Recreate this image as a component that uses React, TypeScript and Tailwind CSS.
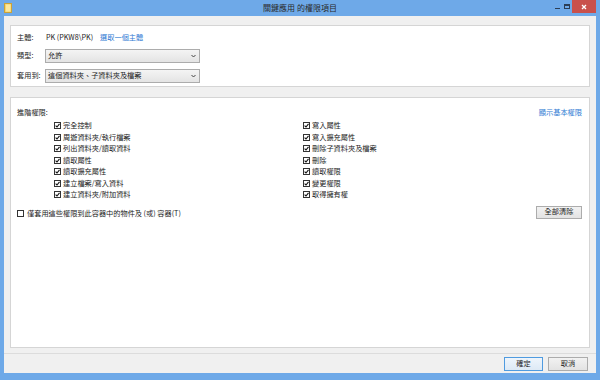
import React from "react";

const font = { fontFamily: '"Noto Sans CJK TC", "Noto Sans", sans-serif' };

function Check({ checked }: { checked: boolean }) {
  return (
    <span className="w-[7px] h-[7px] border border-[#333] bg-white flex items-center justify-center shrink-0">
      {checked && (
        <svg width="5" height="5" viewBox="0 0 5 5">
          <path d="M0.6 2.6 L2 4 L4.5 0.8" stroke="#111" strokeWidth="1.1" fill="none" />
        </svg>
      )}
    </span>
  );
}

function CheckRow({ label, checked = true }: { label: string; checked?: boolean }) {
  return (
    <div className="h-[11.5px] flex items-center gap-[2px]">
      <Check checked={checked} />
      <span className="text-[7.2px] leading-none text-[#222]">{label}</span>
    </div>
  );
}

function Select({ value }: { value: string }) {
  return (
    <div className="w-[155px] h-[14px] border border-[#acacac] bg-gradient-to-b from-[#f4f4f4] to-[#e4e4e4] flex items-center justify-between pl-[2px] pr-[3px]">
      <span className="text-[7.2px] leading-none text-[#222]">{value}</span>
      <svg width="5" height="4" viewBox="0 0 5 4">
        <path d="M0.5 1 L2.5 3 L4.5 1" stroke="#444" strokeWidth="1" fill="none" />
      </svg>
    </div>
  );
}

const left = ["完全控制", "周遊資料夾/執行檔案", "列出資料夾/讀取資料", "讀取屬性", "讀取擴充屬性", "建立檔案/寫入資料", "建立資料夾/附加資料"];
const right = ["寫入屬性", "寫入擴充屬性", "刪除子資料夾及檔案", "刪除", "讀取權限", "變更權限", "取得擁有權"];

export default function App() {
  return (
    <div style={font} className="w-[600px] h-[380px] bg-[#6ea9e8] flex flex-col px-[4px] pb-[7px] overflow-hidden">
      <div className="h-[16px] flex items-center shrink-0">
        <svg width="8" height="10" viewBox="0 0 8 10">
          <rect x="0.5" y="0.5" width="7" height="9" fill="#f3d36b" stroke="#c9a23a" />
          <rect x="2" y="1.5" width="4.5" height="7" fill="#fbe79c" />
        </svg>
        <div className="flex-1 pl-[35px] text-center text-[8px] leading-none text-[#2a2a2a]">關鍵應用 的權限項目</div>
        <div className="flex items-start h-full">
          <div className="w-[8px] h-[13px] flex items-center justify-center">
            <div className="w-[5px] h-[1px] bg-[#2c3e55] mt-[3px]" />
          </div>
          <div className="w-[11px] h-[13px] flex items-center justify-center">
            <div className="w-[6px] h-[5px] border border-[#2c3e55] border-t-2" />
          </div>
          <div className="w-[24px] h-[13px] bg-[#c9504b] flex items-center justify-center">
            <svg width="6" height="6" viewBox="0 0 6 6">
              <path d="M1 1 L5 5 M5 1 L1 5" stroke="#fff" strokeWidth="1.3" />
            </svg>
          </div>
        </div>
      </div>
      <div className="flex-1 bg-[#f0f0f0] flex flex-col">
        <div className="mx-[6px] mt-[9px] h-[62px] bg-white border border-[#d5d5d5] pl-[6px] pt-[5px] flex flex-col gap-[4px]">
          <div className="h-[14px] flex items-center">
            <span className="w-[29px] text-[7.2px] leading-none text-[#222]">主體:</span>
            <span className="text-[7.2px] leading-none text-[#222]">PK (PKW8\PK)</span>
            <span className="ml-[7px] text-[7.2px] leading-none text-[#2f7ad3]">選取一個主體</span>
          </div>
          <div className="h-[14px] flex items-center">
            <span className="w-[28px] text-[7.2px] leading-none text-[#222]">類型:</span>
            <Select value="允許" />
          </div>
          <div className="h-[14px] flex items-center mt-[2px]">
            <span className="w-[28px] text-[7.2px] leading-none text-[#222]">套用到:</span>
            <Select value="這個資料夾、子資料夾及檔案" />
          </div>
        </div>
        <div className="mx-[6px] mt-[10px] h-[251px] bg-white border border-[#d5d5d5] px-[6px] pt-[9px] flex flex-col">
          <div className="h-[12px] flex items-center justify-between pr-[1px]">
            <span className="text-[7.2px] leading-none text-[#222]">進階權限:</span>
            <span className="text-[7.2px] leading-none text-[#2f7ad3]">顯示基本權限</span>
          </div>
          <div className="mt-[1px] grid grid-cols-[249px_1fr] pl-[37px]">
            <div className="flex flex-col">
              {left.map((l) => (
                <CheckRow key={l} label={l} />
              ))}
            </div>
            <div className="flex flex-col">
              {right.map((l) => (
                <CheckRow key={l} label={l} />
              ))}
            </div>
          </div>
          <div className="mt-[5px] h-[13px] flex items-center justify-between pr-[1px]">
            <div className="flex items-center gap-[3px] mt-[3px]">
              <Check checked={false} />
              <span className="text-[7.2px] leading-none text-[#222]">僅套用這些權限到此容器中的物件及 (或) 容器(T)</span>
            </div>
            <div className="w-[46px] h-[13px] border border-[#acacac] bg-gradient-to-b from-[#f2f2f2] to-[#e3e3e3] flex items-center justify-center text-[7.2px] leading-none text-[#222]">
              全部清除
            </div>
          </div>
        </div>
        <div className="mt-[5px] border-t border-[#dcdcdc] flex-1 flex items-center justify-end gap-[5px] pr-[8px]">
          <div className="w-[39px] h-[14px] border border-[#4f9be0] bg-gradient-to-b from-[#eef5fc] to-[#dde9f5] flex items-center justify-center text-[7.2px] leading-none text-[#222]">
            確定
          </div>
          <div className="w-[40px] h-[14px] border border-[#acacac] bg-gradient-to-b from-[#f2f2f2] to-[#e3e3e3] flex items-center justify-center text-[7.2px] leading-none text-[#222]">
            取消
          </div>
        </div>
      </div>
    </div>
  );
}
